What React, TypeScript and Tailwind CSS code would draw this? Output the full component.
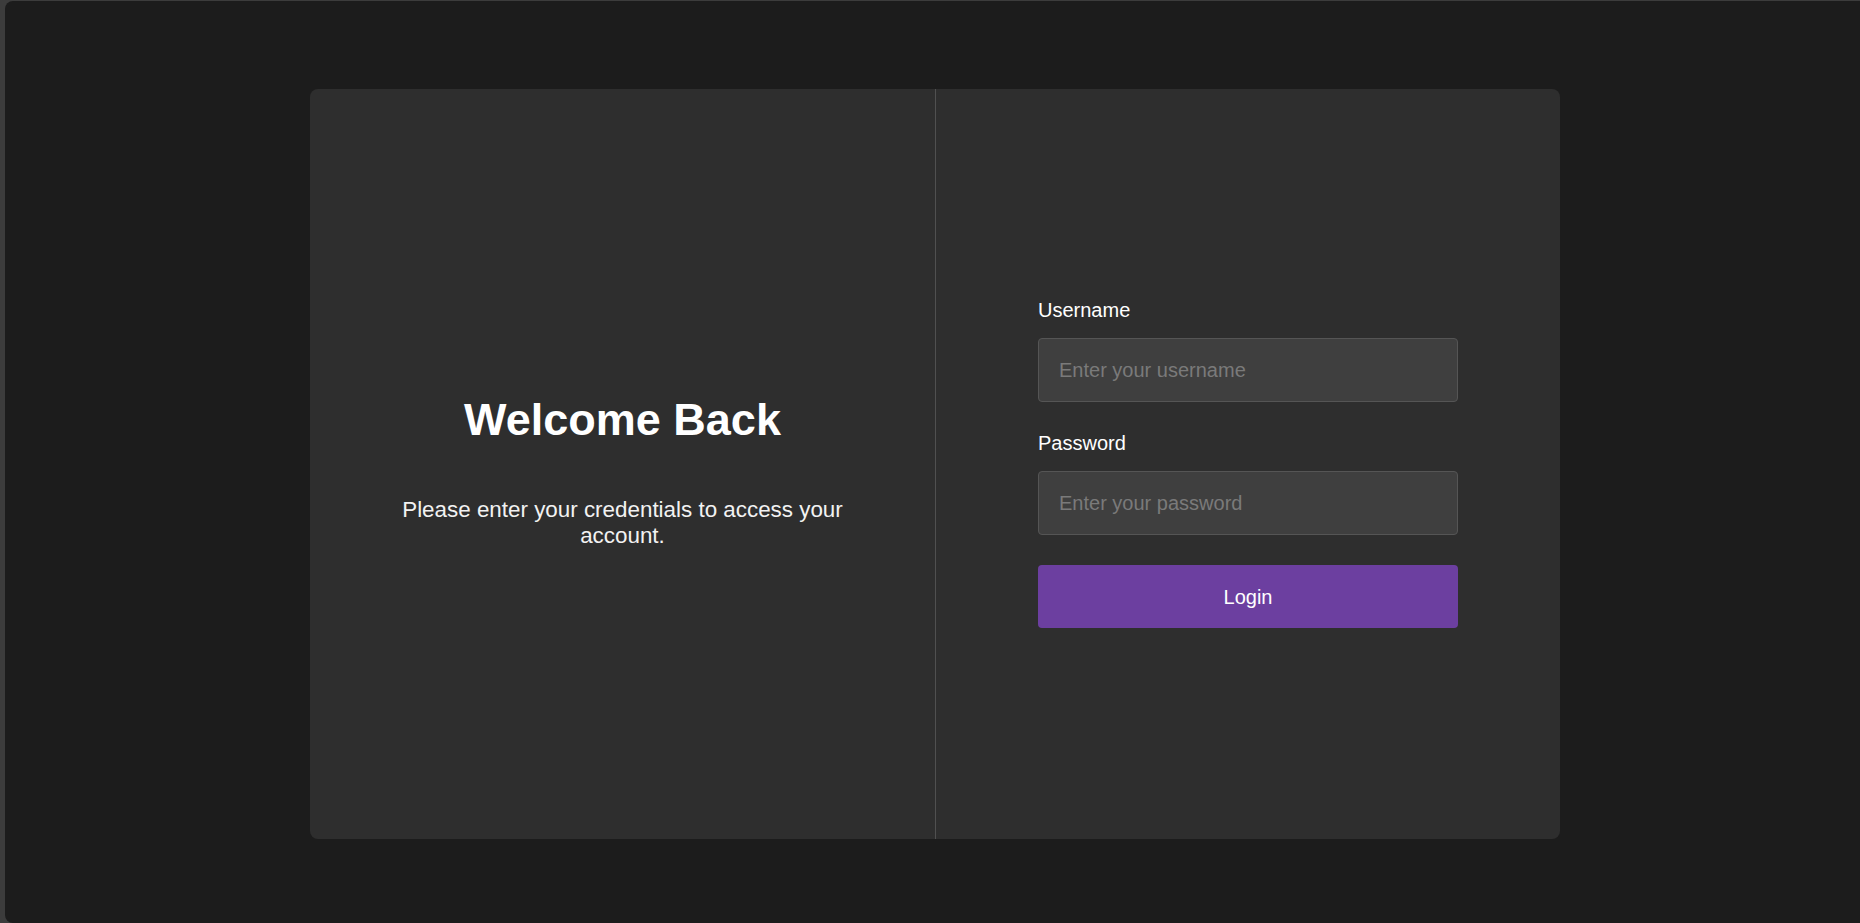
import { useState } from 'react';

export default function App() {
    const [username, setUsername] = useState('');
    const [password, setPassword] = useState('');

    return (
        <div className="h-[923px] w-full overflow-hidden bg-[#3c3c3c] pl-[5px] pt-px font-['Liberation_Sans',Arial,sans-serif]">
            <div className="flex h-full w-full items-center justify-center rounded-l-[8px] bg-[#1c1c1c] pl-[5px] pt-[4px]">
                <div className="flex h-[750px] w-[1250px] rounded-[8px] bg-[#2e2e2e]">
                    {/* welcome side */}
                    <div className="flex w-[625px] flex-col items-center justify-center px-[80px] pt-[14px] text-center">
                        <h1 className="text-[45px] font-bold leading-[52px] text-white">Welcome Back</h1>
                        <p className="mt-[51px] text-[22.4px] leading-[26px] text-[#f2f2f2]">
                            Please enter your credentials to access your account.
                        </p>
                    </div>

                    <div className="w-px bg-[#505050]" />

                    {/* login form */}
                    <div className="flex flex-1 items-center justify-center pb-[1px]">
                        <form className="flex w-[420px] flex-col" onSubmit={e => e.preventDefault()}>
                            <label className="mb-4 text-[20px] leading-[23px] text-white">Username</label>
                            <input
                                type="text"
                                value={username}
                                onChange={e => setUsername(e.target.value)}
                                placeholder="Enter your username"
                                className="h-[64px] rounded-[4px] border border-[#555555] bg-[#3f3f3f] px-[20px] text-[20px] text-white placeholder:text-[#7a7a7a] focus:outline-none"
                            />

                            <label className="mb-4 mt-[30px] text-[20px] leading-[23px] text-white">Password</label>
                            <input
                                type="password"
                                value={password}
                                onChange={e => setPassword(e.target.value)}
                                placeholder="Enter your password"
                                className="h-[64px] rounded-[4px] border border-[#555555] bg-[#3f3f3f] px-[20px] text-[20px] text-white placeholder:text-[#7a7a7a] focus:outline-none"
                            />

                            <button
                                type="submit"
                                className="mt-[30px] h-[63px] cursor-pointer rounded-[4px] bg-[#6c3fa0] text-[20px] text-white"
                            >
                                Login
                            </button>
                        </form>
                    </div>
                </div>
            </div>
        </div>
    );
}
